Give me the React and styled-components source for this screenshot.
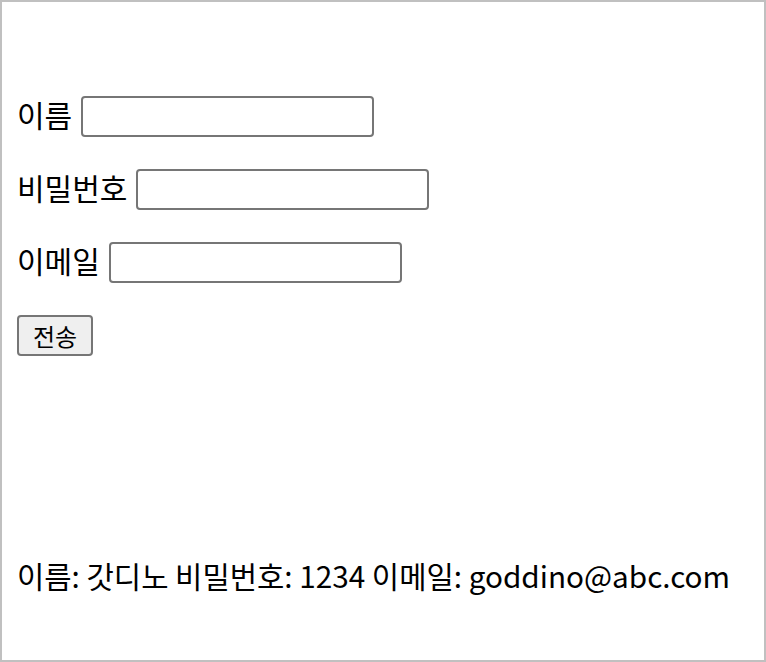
import styled, { createGlobalStyle } from 'styled-components'

const GlobalStyle = createGlobalStyle`
    html, body {
        margin: 0;
        padding: 0;
        background: #ffffff;
    }
    body {
        font-family: "Noto Sans CJK KR", "Noto Sans", sans-serif;
        color: #000000;
    }
`

const Frame = styled.div`
    box-sizing: border-box;
    width: 766px;
    height: 662px;
    border: 2px solid #c0c0c0;
    padding: 0 15px;
    display: flex;
    flex-direction: column;
`

const Form = styled.form`
    display: flex;
    flex-direction: column;
    gap: 32px;
    padding-top: 94px;
`

const Row = styled.div`
    display: flex;
    align-items: center;
    gap: 9px;
    height: 41px;
`

const Label = styled.label`
    font-size: 30px;
    line-height: 1;
    padding-bottom: 6px;
`

const Input = styled.input`
    box-sizing: border-box;
    width: 293px;
    height: 41px;
    border: 2px solid #767676;
    border-radius: 4px;
    background: #ffffff;
    padding: 2px 4px;
    font-size: 24px;
`

const Button = styled.button`
    box-sizing: border-box;
    width: 76px;
    height: 41px;
    border: 2px solid #767676;
    border-radius: 4px;
    background: #efefef;
    font-family: "Noto Sans CJK KR", sans-serif;
    font-size: 24px;
    color: #000000;
    padding: 0;
`

const Result = styled.p`
    margin: auto 0 69px;
    font-size: 29.7px;
    line-height: 1;
`

const App = () => {
    return (
        <>
            <GlobalStyle />
            <Frame>
                <Form onSubmit={(e) => e.preventDefault()}>
                    <Row>
                        <Label htmlFor="name">이름</Label>
                        <Input id="name" type="text" />
                    </Row>
                    <Row>
                        <Label htmlFor="password">비밀번호</Label>
                        <Input id="password" type="password" />
                    </Row>
                    <Row>
                        <Label htmlFor="email">이메일</Label>
                        <Input id="email" type="text" />
                    </Row>
                    <Row>
                        <Button type="submit">전송</Button>
                    </Row>
                </Form>
                <Result>이름: 갓디노 비밀번호: 1234 이메일: goddino@abc.com</Result>
            </Frame>
        </>
    )
}

export default App
